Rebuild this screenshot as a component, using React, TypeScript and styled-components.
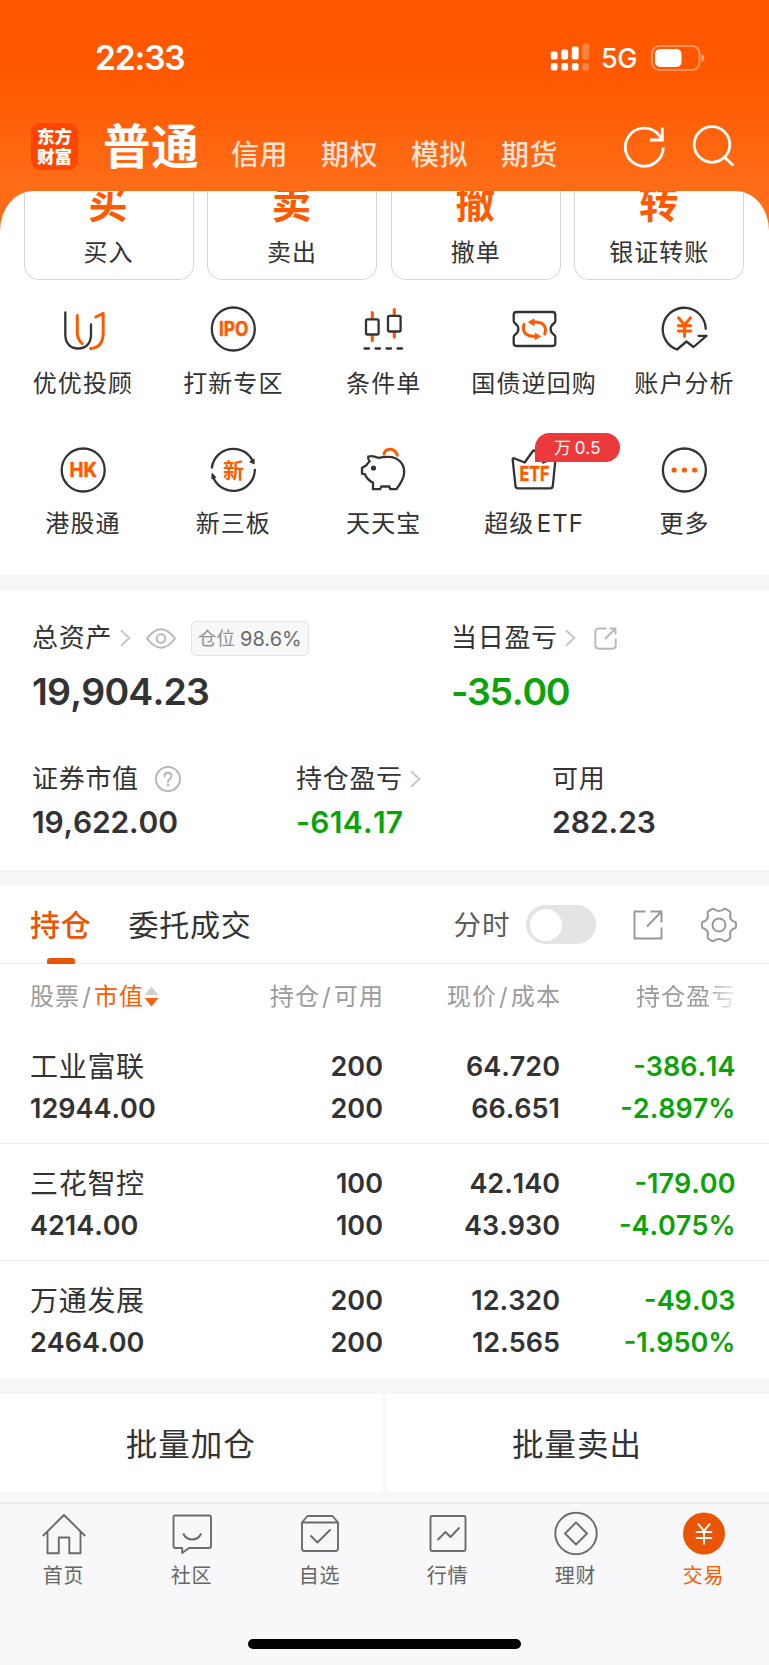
import React from "react";
import styled, { createGlobalStyle } from "styled-components";

const ORANGE = "#ff5a00";
const INK = "#333333";
const GREEN = "#0aa30a";

const GlobalStyle = createGlobalStyle`
  * { box-sizing: border-box; }
  body {
    margin: 0;
    background: #f8f8fa;
    color: ${INK};
    font-family: Inter, "Noto Sans CJK SC", sans-serif;
    line-height: 1;
    white-space: nowrap;
  }
  svg { display: block; flex: none; overflow: visible; }
`;

const Phone = styled.div`
  width: 769px;
  height: 1665px;
  display: flex;
  flex-direction: column;
  overflow: hidden;
  background: linear-gradient(to bottom, #ff5800 0, #ff5800 72px, #ff6c17 185px, #ff701c 240px);
`;

/* ---------- status bar and header ---------- */

const StatusBar = styled.div`
  height: 115px;
  flex: none;
  display: flex;
  align-items: center;
  justify-content: space-between;
  padding: 0 64.5px 0 95px;
  color: #fff;
`;

const Clock = styled.div`
  font-size: 33.5px;
  font-weight: 600;
  letter-spacing: -1.1px;
  padding-top: 2px;
`;

const StatusIcons = styled.div`
  display: flex;
  align-items: center;
`;

const Network = styled.div`
  width: 49.5px;
  padding-left: 12px;
  box-sizing: content-box;
  font-size: 27px;
  font-weight: 500;
  letter-spacing: -0.4px;
  padding-top: 2px;
`;

const Header = styled.div`
  height: 76px;
  flex: none;
  display: flex;
  padding: 0 34.5px 0 31px;
  color: #fff;
`;

const Logo = styled.div`
  width: 47px;
  height: 47px;
  margin-top: 8px;
  border-radius: 9px;
  background: #ff4500;
  display: flex;
  flex-direction: column;
  align-items: center;
  justify-content: center;
  font-size: 17.5px;
  font-weight: 900;
  line-height: 19.5px;
`;

const Title = styled.div`
  width: 153px;
  padding-left: 25px;
  font-size: 47.5px;
  font-weight: 700;
  line-height: 63px;
  letter-spacing: 0.8px;
`;

const HeaderTab = styled.div`
  width: 90px;
  font-size: 28px;
  font-weight: 500;
  line-height: 80px;
  letter-spacing: 0.6px;
  color: rgba(255, 255, 255, 0.82);
`;

const HeaderIcons = styled.div`
  display: flex;
  gap: 26.5px;
  margin: 10px 0 0 auto;
`;

/* ---------- quick actions ---------- */

const Sheet = styled.div`
  height: 384px;
  flex: none;
  background: #fff;
  border-radius: 33px 33px 0 0 / 40px 40px 0 0;
  overflow: hidden;
`;

const Cards = styled.div`
  height: 89px;
  display: grid;
  grid-template-columns: repeat(4, 170px);
  column-gap: 13.6px;
  padding-left: 23.5px;
`;

const Card = styled.div`
  border: 1.5px solid #d6d6d6;
  border-top: 0;
  border-radius: 0 0 15px 15px;
  display: flex;
  flex-direction: column;
  align-items: center;
`;

const CardGlyph = styled.div`
  height: 40px;
  margin: -7px 0 0 -1px;
  font-size: 39.5px;
  line-height: 40px;
  font-weight: 700;
  color: ${ORANGE};
`;

const CardLabel = styled.div`
  font-size: 24px;
  letter-spacing: 1px;
  margin: 17px 0 0 0;
`;

const Shortcuts = styled.div`
  display: grid;
  grid-template-columns: repeat(5, 150.4px);
  grid-auto-rows: 140.7px;
  padding: 25px 0 0 7.5px;
`;

const Shortcut = styled.div`
  position: relative;
  display: flex;
  flex-direction: column;
  align-items: center;
`;

const ShortcutLabel = styled.div`
  font-size: 24px;
  letter-spacing: 1.1px;
  word-spacing: -5.5px;
  margin: 18.8px 0 0 0.5px;
`;

const Badge = styled.div`
  position: absolute;
  left: 76px;
  top: -12.5px;
  width: 85.5px;
  height: 29px;
  border-radius: 15px 15px 15px 0;
  background: #ec3a3c;
  color: #fff;
  font-size: 17px;
  letter-spacing: 0.3px;
  word-spacing: -1.5px;
  line-height: 30px;
  text-align: center;
`;

const Band = styled.div<{ $h: number }>`
  height: ${(p) => p.$h}px;
  flex: none;
  background: #f6f7f9;
`;

/* ---------- assets ---------- */

const Assets = styled.div`
  height: 279px;
  flex: none;
  background: #fff;
  padding-left: 32px;
`;

const AssetRow = styled.div<{ $columns: string; $top: number }>`
  display: grid;
  grid-template-columns: ${(p) => p.$columns};
  padding-top: ${(p) => p.$top}px;
`;

const AssetLabel = styled.div`
  height: 36px;
  display: flex;
  align-items: center;
  font-size: 26px;
  letter-spacing: 0.7px;
`;

const AssetValue = styled.div<{ $size: number; $top: number; $track: number; $down?: boolean }>`
  font-size: ${(p) => p.$size}px;
  height: ${(p) => p.$size}px;
  margin-top: ${(p) => p.$top}px;
  letter-spacing: ${(p) => p.$track}px;
  font-weight: 600;
  font-kerning: none;
  color: ${(p) => (p.$down ? GREEN : INK)};
`;

const PositionTag = styled.div`
  height: 35px;
  width: 117.5px;
  margin-left: 15.5px;
  padding-top: 1px;
  border: 1.5px solid #e2e3e6;
  border-radius: 5px;
  background: #f7f8fa;
  display: flex;
  align-items: center;
  justify-content: center;
  gap: 5px;
  color: #6b6b6b;
  font-size: 20px;
  letter-spacing: 0;
`;

const TagName = styled.span`
  font-size: 18.5px;
  color: #909090;
`;

/* ---------- holdings ---------- */

const HoldingTabs = styled.div`
  height: 78px;
  flex: none;
  background: #fff;
  border-bottom: 1.5px solid #f0f0f1;
  display: flex;
  align-items: center;
  padding: 0 32px 0 30px;
`;

const HoldingTab = styled.div<{ $active?: boolean }>`
  position: relative;
  width: ${(p) => (p.$active ? 98.5 : 325.5)}px;
  font-size: 30px;
  letter-spacing: 0.8px;
  line-height: 78px;
  font-weight: ${(p) => (p.$active ? 500 : 400)};
  color: ${(p) => (p.$active ? "#ea5504" : INK)};
  &::after {
    content: "";
    display: ${(p) => (p.$active ? "block" : "none")};
    position: absolute;
    left: 17px;
    bottom: 0;
    width: 27.5px;
    height: 5.5px;
    border-radius: 3px 3px 1px 1px;
    background: #ea5504;
  }
`;

const ToggleLabel = styled.div`
  width: 72.5px;
  font-size: 27.5px;
  letter-spacing: 1px;
  padding-top: 2px;
  color: #5c5c5c;
`;

const Toggle = styled.div`
  width: 70px;
  height: 39.5px;
  border-radius: 20px;
  background: #e4e4e6;
  padding: 4px;
  margin-right: 37.5px;
`;

const Knob = styled.div`
  width: 32px;
  height: 32px;
  border-radius: 50%;
  background: #fff;
`;

const TableRow = styled.div`
  display: grid;
  grid-template-columns: 200px 153px 177px 175.5px;
  padding-left: 30px;
  background: #fff;
  flex: none;
`;

const TableHead = styled(TableRow)`
  height: 63px;
  padding-top: 2px;
  align-items: center;
  font-size: 24px;
  letter-spacing: 1.1px;
  color: #9b9b9b;
`;

const HeadCell = styled.div<{ $fade?: boolean }>`
  justify-self: end;
  margin-right: -1px;
  mask-image: ${(p) => (p.$fade ? "linear-gradient(to right, #000 68%, transparent 104%)" : "none")};
`;

const SortCell = styled.div`
  display: flex;
  align-items: center;
`;

const Slash = styled.span`
  margin: 0 2px;
`;

const Sorted = styled.span`
  color: ${ORANGE};
`;

const HoldingRow = styled(TableRow)`
  height: 117px;
  padding-top: 18.6px;
  border-bottom: 1.5px solid #f1f1f2;
  &:last-of-type { border-bottom: 0; }
`;

const Cell = styled.div<{ $end?: boolean; $down?: boolean }>`
  display: flex;
  flex-direction: column;
  align-items: ${(p) => (p.$end ? "flex-end" : "flex-start")};
  font-size: 27px;
  font-weight: 600;
  font-kerning: none;
  line-height: 42px;
  color: ${(p) => (p.$down ? GREEN : INK)};
`;

const StockName = styled.div`
  font-size: 28px;
  font-weight: 400;
  letter-spacing: 0.7px;
`;

const BatchActions = styled.div`
  height: 98px;
  flex: none;
  display: grid;
  grid-template-columns: 382.5px 383px;
  column-gap: 3.5px;
  background: #f6f7f9;
`;

const BatchButton = styled.div`
  background: #fff;
  display: flex;
  align-items: center;
  justify-content: center;
  font-size: 31.5px;
  letter-spacing: 1px;
  padding: 3px 1px 0 0;
`;

/* ---------- bottom navigation ---------- */

const BottomNav = styled.div`
  flex: 1;
  background: #f8f8fa;
  border-top: 2px solid #e9ebed;
`;

const NavItems = styled.div`
  display: grid;
  grid-template-columns: repeat(6, 128px);
  height: 136px;
`;

const NavItem = styled.div<{ $active?: boolean }>`
  display: flex;
  flex-direction: column;
  align-items: center;
  padding-top: 8px;
  font-size: 20px;
  letter-spacing: 0.8px;
  color: ${(p) => (p.$active ? ORANGE : "#666")};
`;

const NavLabel = styled.div`
  margin: 9.5px 0 0 -1px;
`;

const HomeIndicator = styled.div`
  width: 273px;
  height: 10px;
  border-radius: 5px;
  background: #000;
  margin: -1px auto 0;
`;

/* ---------- drawings ---------- */

const SignalIcon = () => (
  <svg width="39" height="30" viewBox="0 0 39 30" fill="#fff">
    {[8.5, 6.5, 3.5].map((y, i) => (
      <g key={y}>
        <rect x={0.8 + i * 10.5} y={y} width="6.8" height={16.5 - y} rx="2" />
        <rect x={0.8 + i * 10.5} y="20" width="6.8" height="7.5" rx="2" />
      </g>
    ))}
    <g opacity="0.25">
      <rect x="32.3" y="0.5" width="6.8" height="16" rx="2" />
      <rect x="32.3" y="20" width="6.8" height="7.5" rx="2" />
    </g>
  </svg>
);

const BatteryIcon = () => (
  <svg width="54" height="26" viewBox="0 0 54 26">
    <rect x="1" y="1" width="47.5" height="24" rx="7.5" fill="none" stroke="#fff" strokeOpacity="0.45" strokeWidth="1.7" />
    <rect x="4" y="4" width="26.5" height="18" rx="5" fill="#fff" />
    <path d="M50.5 9v8q3-1.300 3-4t-3-4z" fill="#fff" fillOpacity="0.5" />
  </svg>
);

const RefreshIcon = () => (
  <svg width="42" height="44" viewBox="0 0 42 44" fill="none" stroke="#fff" strokeWidth="2.800">
    <path d="M39.300 22.500A19 19 0 1 1 34.500 9.500L38 13.500" />
    <path d="M38.300 2.500V15H26" />
  </svg>
);

const SearchIcon = () => (
  <svg width="42" height="44" viewBox="0 0 42 44" fill="none" stroke="#fff" strokeWidth="2.800">
    <circle cx="19" cy="19.500" r="17.800" />
    <path d="M31.500 32L40.300 40.500" />
  </svg>
);

const Pictogram = ({ children }: { children: React.ReactNode }) => (
  <svg width="48" height="48" viewBox="0 0 48 48" fill="none" stroke={INK} strokeWidth="2.300" strokeLinecap="round" strokeLinejoin="round">
    {children}
  </svg>
);

const IconText = ({ x, y, w, size, outline = 0.5, children }: { x: number; y: number; w: number; size: number; outline?: number; children: string }) => (
  <text
    x={x}
    y={y}
    textLength={w}
    lengthAdjust="spacingAndGlyphs"
    fontSize={size}
    fontWeight={700}
    fill={ORANGE}
    stroke={ORANGE}
    strokeWidth={outline}
  >
    {children}
  </text>
);

const AdvisorIcon = () => (
  <Pictogram>
    <path d="M6.300 7.500V29.500C6.300 38.500 11.500 43.500 19.200 43.500S32 38.500 32 29.500V19.500" />
    <g stroke={ORANGE} strokeWidth="3">
      <path d="M18.300 10.500V27.500Q18.300 34.500 23.200 38.500" />
      <path d="M36.800 12L44.200 8.300V27.500C44.200 37 40 43 31.500 43.500" />
    </g>
  </Pictogram>
);

const IpoIcon = () => (
  <Pictogram>
    <circle cx="24.300" cy="24" r="21.500" />
    <IconText x={10} y={31.2} w={29.5} size={19.5}>IPO</IconText>
  </Pictogram>
);

const CandleIcon = () => (
  <Pictogram>
    <g stroke={ORANGE} strokeWidth="3.200">
      <path d="M13.300 7.500V13M13.300 31V35.500M35.300 4.500V9M35.300 27.500V32" />
    </g>
    <rect x="7" y="14.300" width="12.600" height="15.200" rx="1.500" />
    <rect x="29" y="10.800" width="12.600" height="15.700" rx="1.500" />
    <path d="M5.500 43.500H10M16.500 43.500H21M27.500 43.500H32M38.500 43.500H43" />
  </Pictogram>
);

const BondIcon = () => (
  <Pictogram>
    <path d="M6.500 7H42.500Q45.300 7 45.300 9.800V16Q45.300 17.300 44 18.200C39.500 21.500 39.500 26.500 44 29.800Q45.300 30.700 45.300 32V38.300Q45.300 41 42.500 41H6.500Q3.700 41 3.700 38.300V32Q3.700 30.700 5 29.800C9.500 26.500 9.500 21.500 5 18.200Q3.700 17.300 3.700 16V9.800Q3.700 7 6.500 7Z" />
    <g stroke={ORANGE} strokeWidth="3">
      <path d="M14 19.500C11.500 28 17 31.500 25.500 31.500" />
      <path d="M23.500 17C31.500 16.500 37.500 20 34.800 29" />
      <path d="M18.800 17L24 14V20.200ZM30.300 31.300L25.200 28.200V34.300Z" fill={ORANGE} strokeWidth="1" />
    </g>
  </Pictogram>
);

const AnalysisIcon = () => (
  <Pictogram>
    <path d="M45.700 23.800A21.500 21.500 0 1 0 17 44.500L26.500 36.500L33.500 42L46.500 30.800H38.500" />
    <path d="M18.500 12.800L24.500 20L30.500 12.800M24.500 20V31.500M18.300 20.700H30.700M18.300 26H30.700" stroke={ORANGE} strokeWidth="2.900" />
  </Pictogram>
);

const HkIcon = () => (
  <Pictogram>
    <circle cx="24.200" cy="24" r="21.500" />
    <IconText x={10.5} y={31.2} w={27.5} size={19.5}>HK</IconText>
  </Pictogram>
);

const NewBoardIcon = () => (
  <Pictogram>
    <path d="M2.900 21.500A21.600 21.600 0 0 1 43.500 14.500" />
    <path d="M41 15.800L45 13.300V17.800Z" fill={INK} strokeWidth="1.200" />
    <path d="M45.900 23.800A21.600 21.600 0 0 1 5 33" />
    <path d="M3.200 27.700L6.600 31.300L2.900 32.600Z" fill={INK} strokeWidth="1.200" />
    <IconText x={14} y={31.5} w={21} size={21} outline={0}>新</IconText>
  </Pictogram>
);

const PiggyIcon = () => (
  <Pictogram>
    <path d="M25 8.200C26.500 1.500 36 1.500 38.200 9.200" stroke={ORANGE} strokeWidth="3" />
    <path
      d="M9.300 10.500Q14 9.300 19 11.800Q24 10.800 29.500 10.800C39 10.800 45.200 17.500 45.200 26C45.200 33 41 38.500 37.300 43.200H31.300L30.300 40.500H22.500L21 43.200H14V36.800Q8 33.500 5.800 28.200L3 27.500V22L7.500 19.300Q8.300 17.500 10.500 15.500Q8.800 13 9.300 10.500Z"
      fill="#fff"
      strokeLinejoin="miter"
    />
    <circle cx="14.500" cy="22" r="2.600" fill={INK} stroke="none" />
  </Pictogram>
);

const EtfIcon = () => (
  <Pictogram>
    <path d="M4 12.300L14.700 16.500L22.500 5.500Q24 3.500 25.500 5.500L33.300 16.500L44 12.300Q45.500 12 45.400 13.800L42.800 40Q42.500 42.300 40.300 42.300H8Q5.800 42.300 5.500 40L2.700 13.800Q2.600 12 4 12.300Z" />
    <IconText x={9.5} y={35.2} w={30} size={19.5}>ETF</IconText>
  </Pictogram>
);

const MoreIcon = () => (
  <Pictogram>
    <circle cx="24.400" cy="24" r="21.500" />
    {[14.1, 24.4, 34.7].map((x) => (
      <circle key={x} cx={x} cy="24" r="2.600" fill={ORANGE} stroke="none" />
    ))}
  </Pictogram>
);

const ChevronSvg = styled.svg`
  margin-left: 7.5px;
`;

const Chevron = () => (
  <ChevronSvg width="11" height="18" viewBox="0 0 11 18" fill="none" stroke="#c6c6c6" strokeWidth="1.900">
    <path d="M1 1.300L9.300 9L1 16.700" />
  </ChevronSvg>
);

const EyeIcon = () => (
  <svg width="30" height="21" viewBox="0 0 30 21" fill="none" stroke="#b9b9b9" strokeWidth="2">
    <path d="M1 10.500Q15-8 29 10.500Q15 29 1 10.500Z" />
    <circle cx="15" cy="10.500" r="4.300" />
  </svg>
);

const LabelIcon = styled.span<{ $gap: number }>`
  margin-left: ${(p) => p.$gap}px;
`;

const HelpIcon = () => (
  <svg width="26" height="26" viewBox="0 0 26 26" fill="none" stroke="#b5b5b5" strokeWidth="1.900" strokeLinecap="round">
    <circle cx="13" cy="13" r="12" />
    <path d="M9.500 10.200C9.500 5.500 16.500 5.500 16.500 10.200C16.500 13 13 12.800 13 15.800" />
    <circle cx="13" cy="19" r="0.500" />
  </svg>
);

const ShareSmallIcon = () => (
  <svg width="23" height="23" viewBox="0 0 23 23" fill="none" stroke="#b9b9b9" strokeWidth="1.900">
    <path d="M12.500 1.500H5Q1.300 1.500 1.300 5V18Q1.300 21.700 5 21.700H18Q21.700 21.700 21.700 18V11.500" />
    <path d="M15.500 1.500H21.500V7.500M21.500 1.500L11 12" />
  </svg>
);

const ShareIcon = () => (
  <svg width="30" height="30" viewBox="0 0 30 30" fill="none" stroke="#999" strokeWidth="2">
    <path d="M12.500 1.500H1.500V28.500H28.500V17.500" />
    <path d="M17.500 1.500H28.500V12.500M28.500 1.500L14 16.500" />
  </svg>
);

const GearIcon = () => (
  <svg width="36" height="36" viewBox="0 0 36 36" fill="none" stroke="#999" strokeWidth="2" strokeLinejoin="round">
    <path d="M10.500 2.300L12.500 1.600Q14.500 4 18 4T23.500 1.600L25.500 2.300L29 4.500L29.500 6.500Q28.300 10 30 12.300T34.500 15L35 16.500V19.500L34.500 21Q31.800 21.500 30 23.700T29.500 29.500L29 31.500L25.500 33.700L23.500 34.400Q21.500 32 18 32T12.500 34.400L10.500 33.700L7 31.500L6.500 29.500Q7.700 26 6 23.700T1.500 21L1 19.500V16.500L1.500 15Q4.200 14.500 6 12.300T6.500 6.500L7 4.500Z" />
    <circle cx="18" cy="18" r="6.500" />
  </svg>
);

const SortIcon = () => (
  <svg width="15" height="21" viewBox="0 0 15 21">
    <path d="M7.500 0.500L14.500 9H0.500Z" fill="#cfcfcf" />
    <path d="M7.500 20.500L14.500 12H0.500Z" fill="#ff6010" />
  </svg>
);

const NavIcon = ({ children }: { children: React.ReactNode }) => (
  <svg width="44" height="44" viewBox="0 0 44 44" fill="none" stroke="#6b6b6b" strokeWidth="1.900" strokeLinejoin="round">
    {children}
  </svg>
);

const navItems: { label: string; icon: React.ReactNode; active?: boolean }[] = [
  { label: "首页", icon: <path d="M0.800 24L22 3L43.200 24M5.500 20V41.300H16.800V25.500H27.300V41.300H38.500V20" /> },
  {
    label: "社区",
    icon: (
      <>
        <path d="M5 3.500H39Q41 3.500 41 5.500V34Q41 36 39 36H19L12.200 41V36H5.500Q3.500 36 3.500 34V5.500Q3.500 3.500 5 3.500Z" />
        <path d="M13.200 21.500C17 29.500 27.500 29.500 31.200 21.500" />
      </>
    ),
  },
  {
    label: "自选",
    icon: (
      <>
        <path d="M4 10.500L9.500 4H34.500L40 10.500V36.500Q40 39 37.500 39H6.500Q4 39 4 36.500ZM4 10.500H40" />
        <path d="M12.500 23.500L19.500 30.500L32.500 17.500" />
      </>
    ),
  },
  {
    label: "行情",
    icon: (
      <>
        <rect x="4.500" y="4" width="35" height="35" rx="1.500" />
        <path d="M11.500 28L19.500 20L24.500 25L33.500 15.500" />
      </>
    ),
  },
  {
    label: "理财",
    icon: (
      <>
        <circle cx="22" cy="21.500" r="20.700" />
        <path d="M22 10.500L33 21.500L22 32.500L11 21.500Z" />
      </>
    ),
  },
  {
    label: "交易",
    active: true,
    icon: (
      <>
        <circle cx="22" cy="21.500" r="21" fill="#ea5504" stroke="none" />
        <path d="M16 11.500L22 19.200L28 11.500M22 19.200V32.500M13.800 20H30.200M13.800 26H30.200" stroke="#fff" strokeWidth="2" />
      </>
    ),
  },
];

const shortcuts = [
  { label: "优优投顾", Icon: AdvisorIcon },
  { label: "打新专区", Icon: IpoIcon },
  { label: "条件单", Icon: CandleIcon },
  { label: "国债逆回购", Icon: BondIcon },
  { label: "账户分析", Icon: AnalysisIcon },
  { label: "港股通", Icon: HkIcon },
  { label: "新三板", Icon: NewBoardIcon },
  { label: "天天宝", Icon: PiggyIcon },
  { label: "超级 ETF", Icon: EtfIcon, badge: "万 0.5" },
  { label: "更多", Icon: MoreIcon },
];

const holdings = [
  { name: "工业富联", value: "12944.00", qty: ["200", "200"], price: ["64.720", "66.651"], pnl: ["-386.14", "-2.897%"] },
  { name: "三花智控", value: "4214.00", qty: ["100", "100"], price: ["42.140", "43.930"], pnl: ["-179.00", "-4.075%"] },
  { name: "万通发展", value: "2464.00", qty: ["200", "200"], price: ["12.320", "12.565"], pnl: ["-49.03", "-1.950%"] },
];

const Pair = ({ values, down }: { values: string[]; down?: boolean }) => (
  <Cell $end $down={down}>
    <div>{values[0]}</div>
    <div>{values[1]}</div>
  </Cell>
);

export default function App() {
  return (
    <Phone>
      <GlobalStyle />
      <StatusBar>
        <Clock>22:33</Clock>
        <StatusIcons>
          <SignalIcon />
          <Network>5G</Network>
          <BatteryIcon />
        </StatusIcons>
      </StatusBar>
      <Header>
        <Logo>
          <div>东方</div>
          <div>财富</div>
        </Logo>
        <Title>普通</Title>
        {["信用", "期权", "模拟", "期货"].map((t) => (
          <HeaderTab key={t}>{t}</HeaderTab>
        ))}
        <HeaderIcons>
          <RefreshIcon />
          <SearchIcon />
        </HeaderIcons>
      </Header>

      <Sheet>
        <Cards>
          {[
            ["买", "买入"],
            ["卖", "卖出"],
            ["撤", "撤单"],
            ["转", "银证转账"],
          ].map(([glyph, label]) => (
            <Card key={label}>
              <CardGlyph>{glyph}</CardGlyph>
              <CardLabel>{label}</CardLabel>
            </Card>
          ))}
        </Cards>
        <Shortcuts>
          {shortcuts.map(({ label, Icon, badge }) => (
            <Shortcut key={label}>
              <Icon />
              <ShortcutLabel>{label}</ShortcutLabel>
              {badge && <Badge>{badge}</Badge>}
            </Shortcut>
          ))}
        </Shortcuts>
      </Sheet>

      <Band $h={16} />
      <Assets>
        <AssetRow $columns="419px 1fr" $top={29}>
          <div>
            <AssetLabel>
              总资产
              <Chevron />
              <LabelIcon $gap={15}><EyeIcon /></LabelIcon>
              <PositionTag>
                <TagName>仓位</TagName>98.6%
              </PositionTag>
            </AssetLabel>
            <AssetValue $size={37.5} $top={16.5} $track={-0.85}>19,904.23</AssetValue>
          </div>
          <div>
            <AssetLabel>
              当日盈亏
              <Chevron />
              <LabelIcon $gap={18}><ShareSmallIcon /></LabelIcon>
            </AssetLabel>
            <AssetValue $size={37.5} $top={16.5} $track={-1.35} $down>-35.00</AssetValue>
          </div>
        </AssetRow>
        <AssetRow $columns="264px 256px 1fr" $top={51}>
          <div>
            <AssetLabel>
              证券市值
              <LabelIcon $gap={16}><HelpIcon /></LabelIcon>
            </AssetLabel>
            <AssetValue $size={30} $top={10} $track={-0.15}>19,622.00</AssetValue>
          </div>
          <div>
            <AssetLabel>
              持仓盈亏
              <Chevron />
            </AssetLabel>
            <AssetValue $size={30} $top={10} $track={0.3} $down>-614.17</AssetValue>
          </div>
          <div>
            <AssetLabel>可用</AssetLabel>
            <AssetValue $size={30} $top={10} $track={0}>282.23</AssetValue>
          </div>
        </AssetRow>
      </Assets>

      <Band $h={16} />
      <HoldingTabs>
        <HoldingTab $active>持仓</HoldingTab>
        <HoldingTab>委托成交</HoldingTab>
        <ToggleLabel>分时</ToggleLabel>
        <Toggle>
          <Knob />
        </Toggle>
        <ShareIcon />
        <LabelIcon $gap={37.5}><GearIcon /></LabelIcon>
      </HoldingTabs>
      <TableHead>
        <SortCell>
          股票<Slash>/</Slash><Sorted>市值</Sorted>
          <SortIcon />
        </SortCell>
        <HeadCell>持仓<Slash>/</Slash>可用</HeadCell>
        <HeadCell>现价<Slash>/</Slash>成本</HeadCell>
        <HeadCell $fade>持仓盈亏</HeadCell>
      </TableHead>
      <div>
        {holdings.map((h) => (
          <HoldingRow key={h.name}>
            <Cell>
              <StockName>{h.name}</StockName>
              <div>{h.value}</div>
            </Cell>
            <Pair values={h.qty} />
            <Pair values={h.price} />
            <Pair values={h.pnl} down />
          </HoldingRow>
        ))}
      </div>

      <Band $h={16} />
      <BatchActions>
        <BatchButton>批量加仓</BatchButton>
        <BatchButton>批量卖出</BatchButton>
      </BatchActions>
      <Band $h={10} />

      <BottomNav>
        <NavItems>
          {navItems.map((item) => (
            <NavItem key={item.label} $active={item.active}>
              <NavIcon>{item.icon}</NavIcon>
              <NavLabel>{item.label}</NavLabel>
            </NavItem>
          ))}
        </NavItems>
        <HomeIndicator />
      </BottomNav>
    </Phone>
  );
}
